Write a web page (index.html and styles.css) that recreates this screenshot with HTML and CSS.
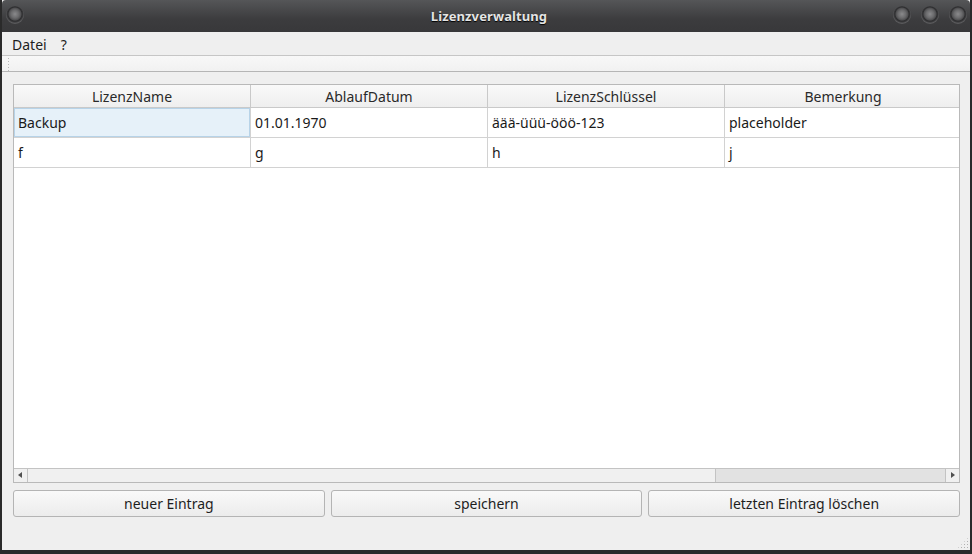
FILE: index.html
```html
<!DOCTYPE html>
<html lang="de">
<head>
<meta charset="utf-8">
<title>Lizenzverwaltung</title>
<link rel="stylesheet" href="styles.css">
</head>
<body>
<div class="window">
  <div class="titlebar">
    <span class="wbtn wbtn-menu"></span>
    <span class="title">Lizenzverwaltung</span>
    <div class="wbtns">
      <span class="wbtn"></span>
      <span class="wbtn"></span>
      <span class="wbtn"></span>
    </div>
  </div>
  <div class="menubar">
    <span class="menu">Datei</span>
    <span class="menu">?</span>
  </div>
  <div class="toolbar"><span class="handle"></span></div>
  <div class="central">
    <div class="tableview">
      <div class="grid">
        <div class="hcell">LizenzName</div>
        <div class="hcell">AblaufDatum</div>
        <div class="hcell">LizenzSchlüssel</div>
        <div class="hcell">Bemerkung</div>
        <div class="cell current">Backup</div>
        <div class="cell">01.01.1970</div>
        <div class="cell">äää-üüü-ööö-123</div>
        <div class="cell">placeholder</div>
        <div class="cell">f</div>
        <div class="cell">g</div>
        <div class="cell">h</div>
        <div class="cell">j</div>
      </div>
      <div class="hscroll">
        <span class="arrow arrow-left"></span>
        <div class="groove"><span class="thumb"></span></div>
        <span class="arrow arrow-right"></span>
      </div>
    </div>
    <div class="buttons">
      <button class="btn">neuer Eintrag</button>
      <button class="btn">speichern</button>
      <button class="btn">letzten Eintrag löschen</button>
    </div>
    <span class="sizegrip"></span>
  </div>
</div>
</body>
</html>
```

FILE: styles.css
```css
html, body {
  margin: 0;
  padding: 0;
  width: 972px;
  height: 554px;
  overflow: hidden;
  background: #2a2a2a;
  font-family: "Noto Sans", "DejaVu Sans", sans-serif;
  font-size: 14px;
  color: #1e1e1e;
}

.window {
  margin: 0 2px;
  width: 968px;
  height: 550px;
  display: flex;
  flex-direction: column;
  background: #efefef;
}

.titlebar {
  height: 32px;
  flex: none;
  position: relative;
  display: flex;
  align-items: center;
  justify-content: center;
  background: linear-gradient(#555658, #3c3c3e 60%, #38383a);
  border-radius: 4px 4px 0 0;
}

.title {
  color: #e4e4e4;
  font-weight: bold;
  font-size: 13px;
  letter-spacing: 0.1px;
  text-shadow: 0 1px 1px #000;
  padding-left: 6px;
}

.wbtn {
  display: block;
  width: 18px;
  height: 18px;
  border-radius: 50%;
  background: radial-gradient(circle at 50% 45%, #8a8a8c 0, #6a6a6c 4px, #505052 6px, #2e2e30 7px, #3a3a3c 8px, #5a5a5c 9px);
}

.wbtn-menu {
  position: absolute;
  left: 4px;
  top: 6px;
}

.wbtns {
  position: absolute;
  right: 3px;
  top: 6px;
  display: flex;
  gap: 10px;
}

.menubar {
  height: 23px;
  flex: none;
  display: flex;
  align-items: center;
  padding-left: 10px;
  gap: 14px;
  background: #efefef;
}

.menu {
  line-height: 23px;
  padding-top: 1px;
}

.toolbar {
  height: 15px;
  flex: none;
  border-top: 1px solid #c6c6c6;
  border-bottom: 1px solid #b5b5b5;
  background: linear-gradient(#f8f8f8, #f1f1f1);
  display: flex;
  align-items: center;
  padding-left: 5px;
}

.handle {
  width: 3px;
  height: 14px;
  background-image: radial-gradient(circle, #b8b8b8 0.7px, transparent 0.8px);
  background-size: 3px 3px;
}

.central {
  flex: 1;
  position: relative;
  padding: 12px 10px 0 11px;
  display: flex;
  flex-direction: column;
}

.tableview {
  height: 397px;
  flex: none;
  border: 1px solid #b9b9b9;
  background: #ffffff;
  display: flex;
  flex-direction: column;
  overflow: hidden;
}

.grid {
  flex: 1;
  display: grid;
  grid-template-columns: repeat(4, 237px);
  grid-template-rows: 23px 30px 30px;
  align-content: start;
  overflow: hidden;
}

.hcell {
  display: flex;
  align-items: center;
  justify-content: center;
  background: linear-gradient(#f9f9f9, #eeeeee);
  border-right: 1px solid #c9c9c9;
  border-bottom: 1px solid #c9c9c9;
  color: #2a2a2a;
}

.cell {
  display: flex;
  align-items: center;
  padding-left: 4px;
  border-right: 1px solid #d2d2d2;
  border-bottom: 1px solid #d2d2d2;
  background: #ffffff;
  color: #1a1a1a;
  white-space: nowrap;
}

.cell.current {
  background: #e6f1f9;
  box-shadow: inset 0 0 0 1px #b7d3e8;
}

.hscroll {
  height: 13px;
  flex: none;
  display: flex;
  border-top: 1px solid #c3c3c3;
  background: #efefef;
}

.arrow {
  width: 13px;
  flex: none;
  position: relative;
  background: #f0f0f0;
}

.arrow-left {
  border-right: 1px solid #c3c3c3;
}

.arrow-right {
  border-left: 1px solid #c3c3c3;
}

.arrow::after {
  content: "";
  position: absolute;
  top: 3px;
  border-top: 3.5px solid transparent;
  border-bottom: 3.5px solid transparent;
}

.arrow-left::after {
  left: 4px;
  border-right: 4px solid #505050;
}

.arrow-right::after {
  left: 5px;
  border-left: 4px solid #505050;
}

.groove {
  flex: 1;
  display: flex;
  background: #e2e2e2;
}

.thumb {
  width: 687px;
  background: #f0f0f0;
  border-right: 1px solid #c3c3c3;
}

.buttons {
  margin-top: 7px;
  display: flex;
  gap: 6px;
}

.btn {
  flex: 1;
  height: 27px;
  font: inherit;
  color: #1e1e1e;
  border: 1px solid #b4b4b4;
  border-radius: 3px;
  background: linear-gradient(#f9f9f9, #ececec);
  padding: 0;
}

.sizegrip {
  position: absolute;
  right: 1px;
  bottom: 1px;
  width: 12px;
  height: 12px;
  background-image: radial-gradient(circle, #b0b0b0 0.8px, transparent 0.9px);
  background-size: 3px 3px;
  clip-path: polygon(100% 0, 100% 100%, 0 100%);
}
```
